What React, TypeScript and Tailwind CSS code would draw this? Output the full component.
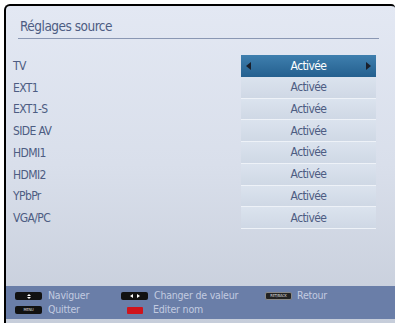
import { ReactNode } from "react";

// Liste des sources
const SOURCES = ["TV", "EXT1", "EXT1-S", "SIDE AV", "HDMI1", "HDMI2", "YPbPr", "VGA/PC"];

const FONT = "[font-family:'DejaVu_Sans_Condensed','DejaVu_Sans',sans-serif]";

function Key({ children, className = "" }: { children?: ReactNode; className?: string }) {
  return (
    <span
      className={`flex items-center justify-center w-[27px] h-[8px] rounded-[2px] bg-[#111] text-[4px] leading-none text-[#ddd] ${className}`}
    >
      {children}
    </span>
  );
}

export default function App() {
  return (
    <div className={`w-[401px] h-[323px] bg-white overflow-hidden pt-[4px] pl-[4px] ${FONT}`}>
      <div className="w-[391px] h-[319px] flex flex-col border-t-2 border-l-2 border-black rounded-tl-[6px] rounded-tr-[4px] bg-gradient-to-b from-[#e3e8f3] via-[#d9dfeb] to-[#c6cdda]">
        {/* Titre */}
        <div className="px-[12px] pt-[11px]">
          <div className="text-[13.5px] leading-[18px] tracking-[-0.5px] text-[#4d5c82] pl-[2px]">Réglages source</div>
          <div className="mt-[3px] h-[2px] w-[361px] border-t border-[#8a97b3] border-b-white" />
        </div>

        {/* Liste */}
        <div className="mt-[15px] flex flex-col">
          {SOURCES.map((src, i) => (
            <div key={src} className="flex items-center h-[21.75px] text-[12px] tracking-[-0.6px]">
              <span className="pl-[7px] w-[235px] text-[#4d5c82]">{src}</span>
              {i === 0 ? (
                <div className="w-[135px] h-full flex items-center justify-between px-[5px] bg-gradient-to-b from-[#3f7fae] to-[#24608f] text-white">
                  <span className="w-0 h-0 border-y-[4px] border-y-transparent border-r-[5px] border-r-[#1a1f2b]" />
                  <span>Activée</span>
                  <span className="w-0 h-0 border-y-[4px] border-y-transparent border-l-[5px] border-l-[#1a1f2b]" />
                </div>
              ) : (
                <div className="w-[135px] h-full flex items-center justify-center bg-gradient-to-b from-[#dbe3ee] to-[#cfd8e5] border-b border-[#eef2f8] text-[#4d5c82]">
                  Activée
                </div>
              )}
            </div>
          ))}
        </div>

        {/* Aide */}
        <div className="mt-auto mb-[4px] h-[33px] bg-[#6a7ea8] text-[10.5px] tracking-[-0.2px] text-[#c2cbe0] grid grid-cols-[106px_144px_1fr] px-[9px] pt-[4px] pb-[3px] content-between">
          <div className="flex items-center gap-[6px] h-[12px]">
            <Key>
              <span className="flex flex-col items-center gap-[1px]">
                <span className="w-0 h-0 border-x-[2px] border-x-transparent border-b-[2px] border-b-white" />
                <span className="w-0 h-0 border-x-[2px] border-x-transparent border-t-[2px] border-t-white" />
              </span>
            </Key>
            <span>Naviguer</span>
          </div>
          <div className="flex items-center gap-[6px] h-[12px]">
            <Key className="gap-[4px]">
              <span className="w-0 h-0 border-y-[2.5px] border-y-transparent border-r-[3px] border-r-white" />
              <span className="w-0 h-0 border-y-[2.5px] border-y-transparent border-l-[3px] border-l-white" />
            </Key>
            <span>Changer de valeur</span>
          </div>
          <div className="flex items-center gap-[5px] h-[12px]">
            <Key className="bg-[#222] border border-[#888]">RET/BACK</Key>
            <span>Retour</span>
          </div>
          <div className="flex items-center gap-[6px] h-[12px]">
            <Key>MENU</Key>
            <span>Quitter</span>
          </div>
          <div className="flex items-center gap-[6px] h-[12px]">
            <span className="ml-[6px] mr-[4px] w-[16px] h-[7px] rounded-[1px] bg-[#d0141c]" />
            <span>Editer nom</span>
          </div>
        </div>
      </div>
    </div>
  );
}
